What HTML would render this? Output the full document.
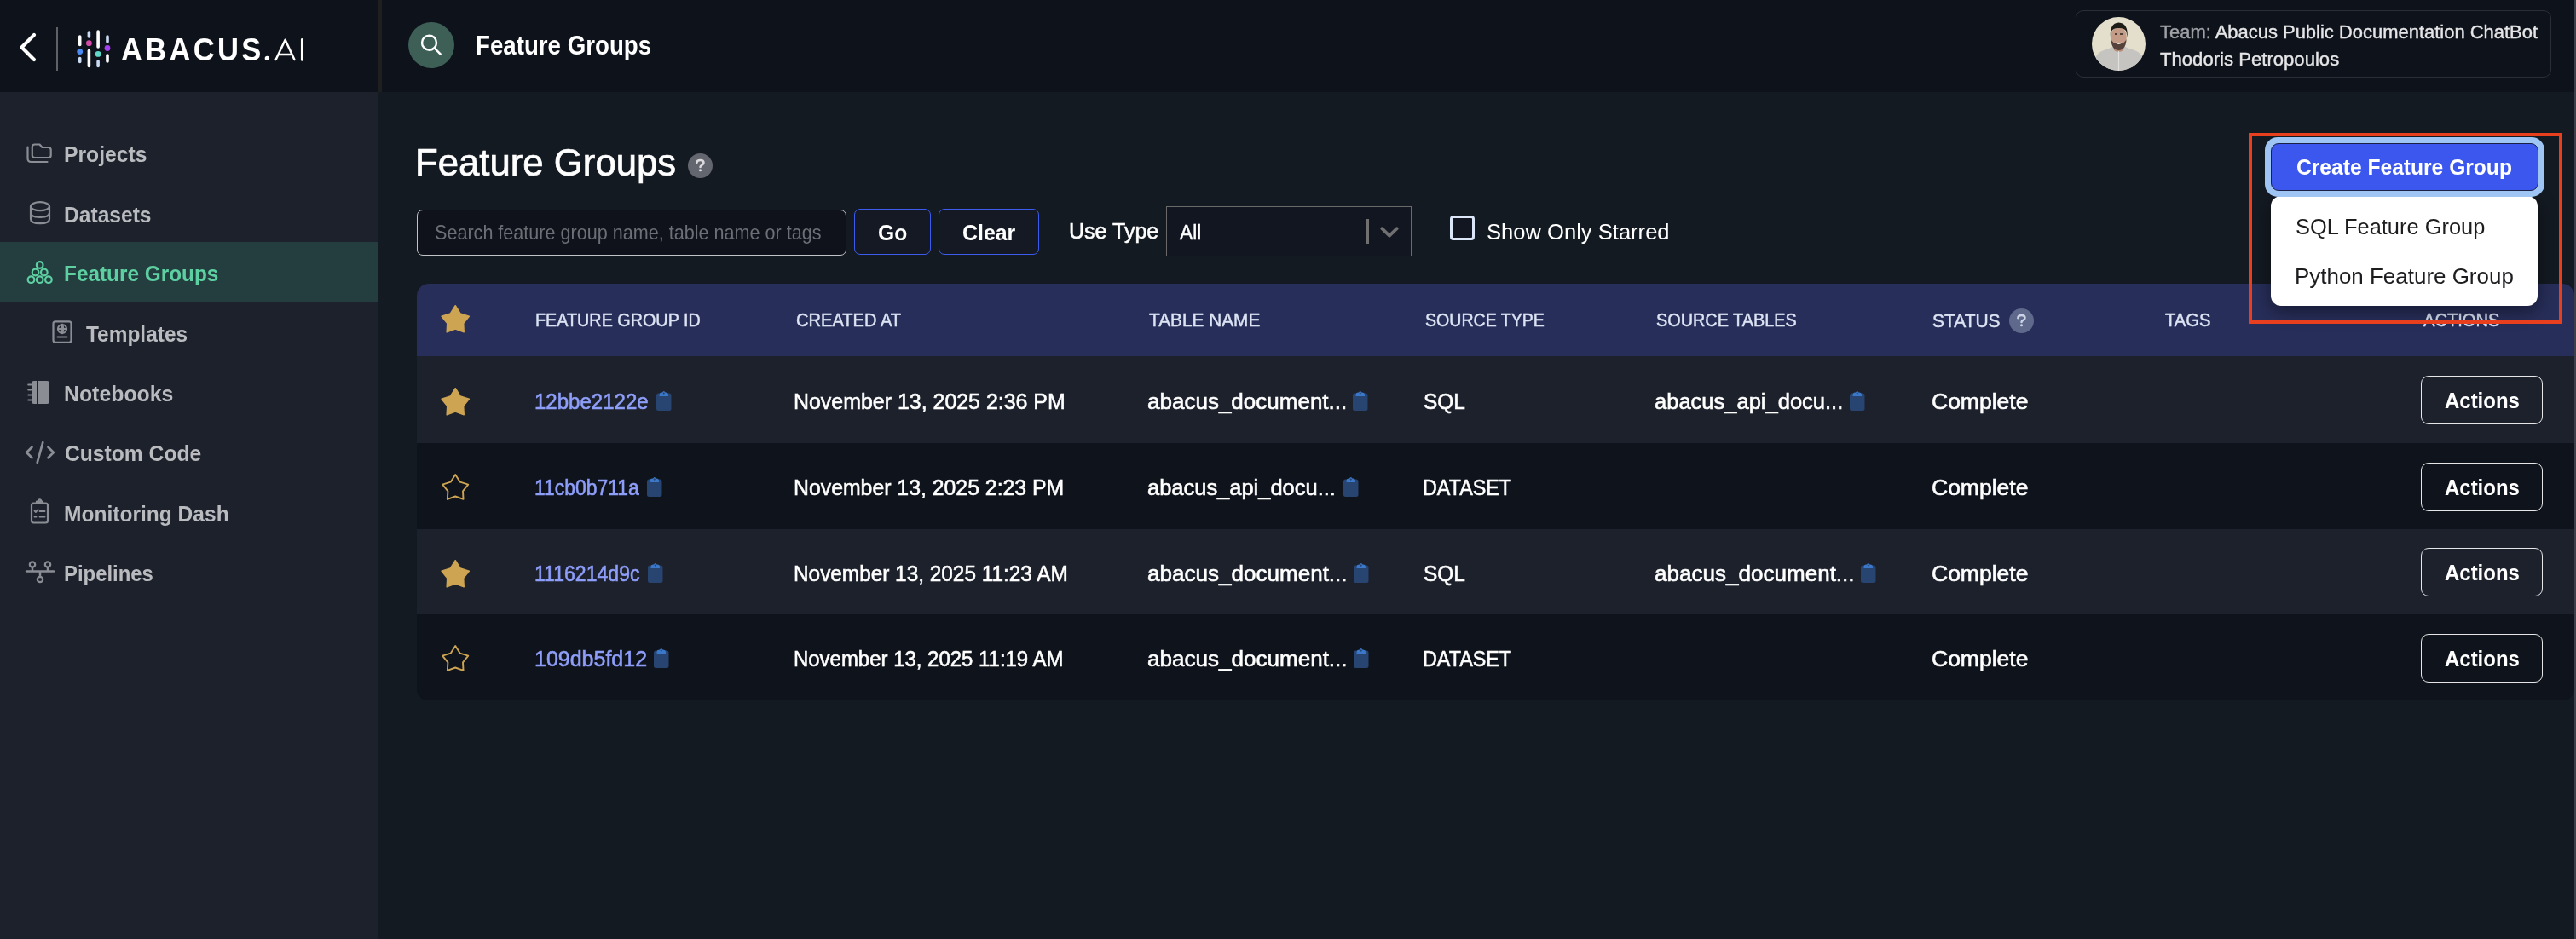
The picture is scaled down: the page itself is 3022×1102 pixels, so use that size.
<!DOCTYPE html>
<html><head><meta charset="utf-8">
<style>
*{margin:0;padding:0;box-sizing:border-box}
html,body{width:3022px;height:1102px;overflow:hidden;background:#141a22;font-family:"Liberation Sans",sans-serif}
.a{position:absolute}
.t{position:absolute;white-space:nowrap;line-height:1;font-family:"Liberation Sans",sans-serif;transform-origin:0 0}
</style></head>
<body>
<div class="a" style="left:0;top:0;width:3022px;height:108px;background:#0e121a"></div>
<div class="a" style="left:444px;top:0;width:4px;height:108px;background:#201f1f"></div>
<div class="a" style="left:0;top:108px;width:444px;height:994px;background:#1c212c"></div>
<svg class="a" style="left:0;top:0" width="444" height="108">
  <path d="M40 41 L25.5 55.5 L40 70" fill="none" stroke="#fff" stroke-width="4.2" stroke-linecap="round" stroke-linejoin="round"/>
  <rect x="66" y="32" width="2" height="51" fill="#5f6166"/>
  <g stroke-linecap="round" stroke-width="3.6">
    <line x1="93.7" y1="43" x2="93.7" y2="52.5" stroke="#fff"/>
    <line x1="93.7" y1="68.5" x2="93.7" y2="72.5" stroke="#c9dbf2"/>
    <line x1="104.4" y1="38" x2="104.4" y2="43" stroke="#c9dbf2"/>
    <line x1="104.4" y1="59.5" x2="104.4" y2="77.5" stroke="#fff"/>
    <line x1="115.1" y1="37" x2="115.1" y2="55" stroke="#fff"/>
    <line x1="115.1" y1="72" x2="115.1" y2="77.5" stroke="#c9dbf2"/>
    <line x1="126" y1="43" x2="126" y2="49" stroke="#c9dbf2"/>
    <line x1="126" y1="65" x2="126" y2="72" stroke="#fff"/>
  </g>
  <circle cx="93.7" cy="60.6" r="3.4" fill="#4a8af2"/>
  <circle cx="104.4" cy="50.7" r="3.4" fill="#d44aa8"/>
  <circle cx="115.1" cy="63.4" r="3.4" fill="#5fd8ca"/>
  <circle cx="126" cy="56.5" r="3.4" fill="#a43ff2"/>
  <circle cx="313.4" cy="68.4" r="2.7" fill="#fff"/>
  <path d="M323.6 70 L334.6 46.7 L345.4 70 M327.4 64 L341.2 64 M354.2 46.2 L354.2 70.6" fill="none" stroke="#fff" stroke-width="2.5" stroke-linecap="round" stroke-linejoin="round"/>
</svg>
<svg class="a" style="left:479px;top:26px" width="54" height="54">
  <circle cx="27" cy="27" r="27" fill="#3e5f56"/>
  <circle cx="24.5" cy="24.2" r="8.5" fill="none" stroke="#fff" stroke-width="2.4"/>
  <line x1="30.6" y1="30.4" x2="37.6" y2="37.4" stroke="#fff" stroke-width="2.5" stroke-linecap="round"/>
</svg>
<div class="a" style="left:2435px;top:12px;width:558px;height:79px;border:1.5px solid #2b2e36;border-radius:9px"></div>
<svg class="a" style="left:2454px;top:20px" width="63" height="63">
  <defs><clipPath id="av"><circle cx="31.5" cy="31.5" r="31.5"/></clipPath>
  <filter id="avb"><feGaussianBlur stdDeviation="0.6"/></filter></defs>
  <g clip-path="url(#av)">
    <rect width="63" height="63" fill="#e4dfcc"/>
    <g filter="url(#avb)">
    <path d="M2 63 L5 46 Q8 40 20 37 L26 34 L37 34 L44 37 Q56 40 59 46 L62 63 Z" fill="#c6c4c1"/>
    <path d="M25 33 L38 33 L37 39 Q31.5 43 26 39 Z" fill="#b48c76"/>
    <ellipse cx="31.5" cy="24" rx="9.3" ry="13" fill="#c39b86"/>
    <path d="M22 24 Q20.5 7 31.5 6.5 Q43 7 41.5 24 L40.5 17 Q38 12.5 31.5 13 Q25 12.5 23 17 Z" fill="#1f1a19"/>
    <path d="M22.5 26 Q23 38.5 31.5 39 Q40 38.5 40.5 26 Q39 31 31.5 31.5 Q24 31 22.5 26 Z" fill="#54433b"/>
    <path d="M27 20 L30 20 M33 20 L36 20" stroke="#2a2220" stroke-width="1.6"/>
    <path d="M28 30 Q31.5 32.5 35 30" stroke="#efe7e0" stroke-width="1.3" fill="none"/>
    <path d="M31.5 40 L31.5 63" stroke="#e2e0de" stroke-width="1.2"/>
    </g>
  </g>
</svg>
<div class="a" style="left:0;top:284px;width:444px;height:71px;background:#243e40"></div>
<svg class="a" style="left:0;top:108px" width="444" height="600" fill="none" stroke="#8a8d94" stroke-width="2.2" stroke-linecap="round" stroke-linejoin="round">
  <g transform="translate(0,-108)">
  <path d="M32.5 172.5 L32.5 186 Q32.5 190 36.5 190 L55.5 190"/>
  <path d="M37.8 182.5 L37.8 172.5 Q37.8 169.5 40.8 169.5 L46.5 169.5 L49.5 173 L56.5 173 Q59.7 173 59.7 176 L59.7 182.5 Q59.7 185 56.7 185 L40.8 185 Q37.8 185 37.8 182.5 Z"/>
  <ellipse cx="47" cy="242.2" rx="11" ry="5"/>
  <path d="M36 242.2 L36 257 Q36 262.2 47 262.2 Q58 262.2 58 257 L58 242.2"/>
  <path d="M36 249.7 Q36 254.8 47 254.8 Q58 254.8 58 249.7"/>
  </g>
  <g transform="translate(0,-108)" stroke="#5dcfa1" stroke-width="2.2">
  <circle cx="46.7" cy="311" r="3.8"/>
  <circle cx="41.6" cy="319.5" r="3.8"/><circle cx="51.8" cy="319.5" r="3.8"/>
  <circle cx="36.5" cy="328.2" r="3.8"/><circle cx="46.7" cy="328.2" r="3.8"/><circle cx="56.9" cy="328.2" r="3.8"/>
  </g>
  <g transform="translate(0,-108)">
  <rect x="62.5" y="377.3" width="21" height="24.5" rx="2.5"/>
  <circle cx="73" cy="386" r="5"/>
  <path d="M68 386 L78 386 M73 381 Q70.5 386 73 391 M73 381 Q75.5 386 73 391"/>
  <path d="M67.5 395.5 L78.5 395.5"/>
  <path d="M33.2 451.5 L36.5 451.5 M33.2 457.5 L36.5 457.5 M33.2 463.5 L36.5 463.5 M33.2 469.5 L36.5 469.5" stroke-width="2"/>
  <path d="M31.2 531 L37.5 524.7 M31.2 531 L37.5 537.3 M62.8 531 L56.5 524.7 M62.8 531 L56.5 537.3 M50.3 519.2 L43.7 542.8" stroke-width="2.7"/>
  <rect x="37" y="590.5" width="19" height="23" rx="2.5"/>
  <path d="M43 590.5 L43 588.5 L50 588.5 L50 590.5"/>
  <circle cx="46.5" cy="588" r="1.6"/>
  <path d="M40.5 599.5 L42 601 L44.5 598 M46.5 600 L52.5 600 M40.5 606.5 L42.5 606.5 M46.5 606.5 L52.5 606.5" stroke-width="1.8"/>
  <path d="M31 670.5 L63 670.5 M38 670.5 L38 666 M56 670.5 L56 666 M47 670.5 L47 677" stroke-width="2.5"/>
  <circle cx="38" cy="662.5" r="3.2"/><circle cx="56" cy="662.5" r="3.2"/><circle cx="47" cy="680" r="3.2"/>
  </g>
</svg>
<div class="a" style="left:37px;top:447px;width:21px;height:26.5px;border-radius:3px;background:#8a8d94"></div>
<div class="a" style="left:43px;top:447px;width:2px;height:26.5px;background:#1c212c"></div>
<svg class="a" style="left:807px;top:180px" width="29" height="29"><circle cx="14.5" cy="14.5" r="14.5" fill="#63666e"/><path d="M10.3 11.2 Q10.6 7.9 14.5 7.9 Q18.5 7.9 18.5 10.9 Q18.5 12.7 16.3 13.9 Q14.5 14.9 14.5 16.1" fill="none" stroke="#dcdcdf" stroke-width="2.5" stroke-linecap="round" stroke-linejoin="round"/><circle cx="14.5" cy="19.8" r="1.55" fill="#dcdcdf"/></svg>
<div class="a" style="left:489px;top:246px;width:504px;height:54px;border:1.5px solid #c2c3c6;border-radius:7px;background:#0f121a"></div>
<div class="a" style="left:1002px;top:245px;width:90px;height:54px;border:1.5px solid #3b5bef;border-radius:7px;background:#141923"></div>
<div class="a" style="left:1101px;top:245px;width:118px;height:54px;border:1.5px solid #3b5bef;border-radius:7px;background:#141923"></div>
<div class="a" style="left:1368px;top:242px;width:288px;height:59px;border:1.5px solid #6a6a6a;background:#111620"></div>
<div class="a" style="left:1603px;top:257px;width:2.5px;height:29px;background:#707070"></div>
<svg class="a" style="left:1615px;top:258px" width="32" height="26"><path d="M6.2 10.2 L15 18.6 L23.8 10.2" fill="none" stroke="#707070" stroke-width="3.8" stroke-linecap="round" stroke-linejoin="round"/></svg>
<div class="a" style="left:1701px;top:253px;width:29px;height:29px;border:3px solid #dbe7f9;border-radius:4px;background:#111620"></div>
<div class="a" style="left:489px;top:333px;width:2531px;height:489px;border-radius:14px;overflow:hidden;background:#0f131b">
<div class="a" style="left:0;top:0;width:2531px;height:85px;background:#272e59"></div>
<div class="a" style="left:0;top:85px;width:2531px;height:102px;background:#1c212c"></div>
<div class="a" style="left:0;top:187px;width:2531px;height:101px;background:#0f131b"></div>
<div class="a" style="left:0;top:288px;width:2531px;height:100px;background:#1c212c"></div>
<div class="a" style="left:0;top:388px;width:2531px;height:101px;background:#0f131b"></div>
</div>
<svg class="a" style="left:500px;top:350px" width="70" height="50"><path d="M34.20 8.80 L40.09 18.11 L50.25 21.15 L43.61 29.51 L44.18 39.67 L34.20 36.06 L24.23 39.67 L24.80 29.51 L18.15 21.15 L28.31 18.11 Z" fill="#cda452" stroke="#cda452" stroke-width="1.6" stroke-linejoin="round"/></svg>
<svg class="a" style="left:2357px;top:361.5px" width="29" height="29"><circle cx="14.5" cy="14.5" r="14.5" fill="#5f698c"/><path d="M10.3 11.2 Q10.6 7.9 14.5 7.9 Q18.5 7.9 18.5 10.9 Q18.5 12.7 16.3 13.9 Q14.5 14.9 14.5 16.1" fill="none" stroke="#cdd3e6" stroke-width="2.5" stroke-linecap="round" stroke-linejoin="round"/><circle cx="14.5" cy="19.8" r="1.55" fill="#cdd3e6"/></svg>
<svg class="a" style="left:500px;top:446.6px" width="70" height="50"><path d="M34.20 8.80 L40.09 18.11 L50.25 21.15 L43.61 29.51 L44.18 39.67 L34.20 36.06 L24.23 39.67 L24.80 29.51 L18.15 21.15 L28.31 18.11 Z" fill="#cda452" stroke="#cda452" stroke-width="1.6" stroke-linejoin="round"/></svg>
<svg class="a" style="left:768.6px;top:457.0px" width="20" height="27"><rect x="1" y="4.5" width="17.5" height="20.5" rx="2.5" fill="#284571"/><path d="M4.5 8 L4.5 6.5 Q4.5 3.5 7.5 3.5 L8 3.5 Q9.75 0.3 11.5 3.5 L12 3.5 Q15 3.5 15 6.5 L15 8 Z" fill="#3b78c9"/><path d="M9.75 3.3 L11 4.6 L9.75 5.9 L8.5 4.6 Z" fill="#284571"/></svg>
<svg class="a" style="left:1586.2px;top:457.0px" width="20" height="27"><rect x="1" y="4.5" width="17.5" height="20.5" rx="2.5" fill="#284571"/><path d="M4.5 8 L4.5 6.5 Q4.5 3.5 7.5 3.5 L8 3.5 Q9.75 0.3 11.5 3.5 L12 3.5 Q15 3.5 15 6.5 L15 8 Z" fill="#3b78c9"/><path d="M9.75 3.3 L11 4.6 L9.75 5.9 L8.5 4.6 Z" fill="#284571"/></svg>
<svg class="a" style="left:2169.2px;top:457.0px" width="20" height="27"><rect x="1" y="4.5" width="17.5" height="20.5" rx="2.5" fill="#284571"/><path d="M4.5 8 L4.5 6.5 Q4.5 3.5 7.5 3.5 L8 3.5 Q9.75 0.3 11.5 3.5 L12 3.5 Q15 3.5 15 6.5 L15 8 Z" fill="#3b78c9"/><path d="M9.75 3.3 L11 4.6 L9.75 5.9 L8.5 4.6 Z" fill="#284571"/></svg>
<div class="a" style="left:2840px;top:441.3px;width:143px;height:57px;border:1.5px solid #e6e6e8;border-radius:9px"></div>
<svg class="a" style="left:500px;top:547.7px" width="70" height="50"><path d="M34.20 8.97 L39.72 17.69 L49.24 20.54 L43.01 28.37 L43.55 37.90 L34.20 34.51 L24.86 37.90 L25.39 28.37 L19.16 20.54 L28.68 17.69 Z" fill="none" stroke="#cda452" stroke-width="1.9" stroke-linejoin="round"/></svg>
<svg class="a" style="left:758.2px;top:558.0999999999999px" width="20" height="27"><rect x="1" y="4.5" width="17.5" height="20.5" rx="2.5" fill="#284571"/><path d="M4.5 8 L4.5 6.5 Q4.5 3.5 7.5 3.5 L8 3.5 Q9.75 0.3 11.5 3.5 L12 3.5 Q15 3.5 15 6.5 L15 8 Z" fill="#3b78c9"/><path d="M9.75 3.3 L11 4.6 L9.75 5.9 L8.5 4.6 Z" fill="#284571"/></svg>
<svg class="a" style="left:1574.6px;top:558.0999999999999px" width="20" height="27"><rect x="1" y="4.5" width="17.5" height="20.5" rx="2.5" fill="#284571"/><path d="M4.5 8 L4.5 6.5 Q4.5 3.5 7.5 3.5 L8 3.5 Q9.75 0.3 11.5 3.5 L12 3.5 Q15 3.5 15 6.5 L15 8 Z" fill="#3b78c9"/><path d="M9.75 3.3 L11 4.6 L9.75 5.9 L8.5 4.6 Z" fill="#284571"/></svg>
<div class="a" style="left:2840px;top:542.8px;width:143px;height:57px;border:1.5px solid #e6e6e8;border-radius:9px"></div>
<svg class="a" style="left:500px;top:648.6px" width="70" height="50"><path d="M34.20 8.80 L40.09 18.11 L50.25 21.15 L43.61 29.51 L44.18 39.67 L34.20 36.06 L24.23 39.67 L24.80 29.51 L18.15 21.15 L28.31 18.11 Z" fill="#cda452" stroke="#cda452" stroke-width="1.6" stroke-linejoin="round"/></svg>
<svg class="a" style="left:759.2px;top:659.0px" width="20" height="27"><rect x="1" y="4.5" width="17.5" height="20.5" rx="2.5" fill="#284571"/><path d="M4.5 8 L4.5 6.5 Q4.5 3.5 7.5 3.5 L8 3.5 Q9.75 0.3 11.5 3.5 L12 3.5 Q15 3.5 15 6.5 L15 8 Z" fill="#3b78c9"/><path d="M9.75 3.3 L11 4.6 L9.75 5.9 L8.5 4.6 Z" fill="#284571"/></svg>
<svg class="a" style="left:1586.6px;top:659.0px" width="20" height="27"><rect x="1" y="4.5" width="17.5" height="20.5" rx="2.5" fill="#284571"/><path d="M4.5 8 L4.5 6.5 Q4.5 3.5 7.5 3.5 L8 3.5 Q9.75 0.3 11.5 3.5 L12 3.5 Q15 3.5 15 6.5 L15 8 Z" fill="#3b78c9"/><path d="M9.75 3.3 L11 4.6 L9.75 5.9 L8.5 4.6 Z" fill="#284571"/></svg>
<svg class="a" style="left:2182.2px;top:659.0px" width="20" height="27"><rect x="1" y="4.5" width="17.5" height="20.5" rx="2.5" fill="#284571"/><path d="M4.5 8 L4.5 6.5 Q4.5 3.5 7.5 3.5 L8 3.5 Q9.75 0.3 11.5 3.5 L12 3.5 Q15 3.5 15 6.5 L15 8 Z" fill="#3b78c9"/><path d="M9.75 3.3 L11 4.6 L9.75 5.9 L8.5 4.6 Z" fill="#284571"/></svg>
<div class="a" style="left:2840px;top:643.3px;width:143px;height:57px;border:1.5px solid #e6e6e8;border-radius:9px"></div>
<svg class="a" style="left:500px;top:748.7px" width="70" height="50"><path d="M34.20 8.97 L39.72 17.69 L49.24 20.54 L43.01 28.37 L43.55 37.90 L34.20 34.51 L24.86 37.90 L25.39 28.37 L19.16 20.54 L28.68 17.69 Z" fill="none" stroke="#cda452" stroke-width="1.9" stroke-linejoin="round"/></svg>
<svg class="a" style="left:766.2px;top:759.0999999999999px" width="20" height="27"><rect x="1" y="4.5" width="17.5" height="20.5" rx="2.5" fill="#284571"/><path d="M4.5 8 L4.5 6.5 Q4.5 3.5 7.5 3.5 L8 3.5 Q9.75 0.3 11.5 3.5 L12 3.5 Q15 3.5 15 6.5 L15 8 Z" fill="#3b78c9"/><path d="M9.75 3.3 L11 4.6 L9.75 5.9 L8.5 4.6 Z" fill="#284571"/></svg>
<svg class="a" style="left:1586.6px;top:759.0999999999999px" width="20" height="27"><rect x="1" y="4.5" width="17.5" height="20.5" rx="2.5" fill="#284571"/><path d="M4.5 8 L4.5 6.5 Q4.5 3.5 7.5 3.5 L8 3.5 Q9.75 0.3 11.5 3.5 L12 3.5 Q15 3.5 15 6.5 L15 8 Z" fill="#3b78c9"/><path d="M9.75 3.3 L11 4.6 L9.75 5.9 L8.5 4.6 Z" fill="#284571"/></svg>
<div class="a" style="left:2840px;top:743.8px;width:143px;height:57px;border:1.5px solid #e6e6e8;border-radius:9px"></div>
<div class="t" style="left:142.35px;top:40.60px;font-size:36.23px;font-weight:bold;color:#fff;transform:scaleX(0.9529);letter-spacing:3.5px;">ABACUS</div>
<div class="t" style="left:558.21px;top:38.56px;font-size:30.87px;font-weight:bold;color:#fff;transform:scaleX(0.8969);">Feature Groups</div>
<div class="t" style="left:2534.00px;top:26.16px;font-size:22.75px;font-weight:normal;color:#e6e6e8;transform:scaleX(0.9651);-webkit-text-stroke-width:0.4px;"><span style="color:#9fa1a6">Team:</span> Abacus Public Documentation ChatBot</div>
<div class="t" style="left:2534.00px;top:58.46px;font-size:22.75px;font-weight:normal;color:#e6e6e8;transform:scaleX(0.9721);-webkit-text-stroke-width:0.4px;">Thodoris Petropoulos</div>
<div class="t" style="left:74.83px;top:168.28px;font-size:26.38px;font-weight:bold;color:#b9bbbf;transform:scaleX(0.9366);">Projects</div>
<div class="t" style="left:74.83px;top:238.88px;font-size:26.38px;font-weight:bold;color:#b9bbbf;transform:scaleX(0.9327);">Datasets</div>
<div class="t" style="left:74.85px;top:308.28px;font-size:26.38px;font-weight:bold;color:#5dcfa1;transform:scaleX(0.9237);">Feature Groups</div>
<div class="t" style="left:101.40px;top:379.08px;font-size:26.38px;font-weight:bold;color:#b9bbbf;transform:scaleX(0.9266);">Templates</div>
<div class="t" style="left:74.82px;top:448.78px;font-size:26.38px;font-weight:bold;color:#b9bbbf;transform:scaleX(0.9421);">Notebooks</div>
<div class="t" style="left:75.77px;top:518.88px;font-size:26.38px;font-weight:bold;color:#b9bbbf;transform:scaleX(0.9347);">Custom Code</div>
<div class="t" style="left:74.84px;top:589.58px;font-size:26.38px;font-weight:bold;color:#b9bbbf;transform:scaleX(0.9307);">Monitoring Dash</div>
<div class="t" style="left:74.89px;top:659.58px;font-size:26.38px;font-weight:bold;color:#b9bbbf;transform:scaleX(0.9053);">Pipelines</div>
<div class="t" style="left:487.13px;top:168.26px;font-size:45.22px;font-weight:normal;color:#fff;transform:scaleX(0.9669);-webkit-text-stroke-width:0.7px;">Feature Groups</div>
<div class="t" style="left:509.77px;top:261.79px;font-size:23.19px;font-weight:normal;color:#6d6f76;transform:scaleX(0.9307);">Search feature group name, table name or tags</div>
<div class="t" style="left:1030.04px;top:261.22px;font-size:25.51px;font-weight:bold;color:#fff;transform:scaleX(0.9647);">Go</div>
<div class="t" style="left:1128.52px;top:261.22px;font-size:25.51px;font-weight:bold;color:#fff;transform:scaleX(0.9762);">Clear</div>
<div class="t" style="left:1254.08px;top:258.32px;font-size:26.09px;font-weight:normal;color:#fff;transform:scaleX(0.9598);-webkit-text-stroke-width:0.5px;">Use Type</div>
<div class="t" style="left:1384.00px;top:261.30px;font-size:23.77px;font-weight:normal;color:#fff;transform:scaleX(0.9600);-webkit-text-stroke-width:0.4px;">All</div>
<div class="t" style="left:1744.21px;top:259.57px;font-size:25.8px;font-weight:normal;color:#fff;transform:scaleX(0.9911);">Show Only Starred</div>
<div class="t" style="left:628.21px;top:364.66px;font-size:22.17px;font-weight:normal;color:#dce4f4;transform:scaleX(0.8925);-webkit-text-stroke-width:0.45px;">FEATURE GROUP ID</div>
<div class="t" style="left:933.79px;top:364.66px;font-size:22.17px;font-weight:normal;color:#dce4f4;transform:scaleX(0.9059);-webkit-text-stroke-width:0.45px;">CREATED AT</div>
<div class="t" style="left:1348.40px;top:364.66px;font-size:22.17px;font-weight:normal;color:#dce4f4;transform:scaleX(0.9391);-webkit-text-stroke-width:0.45px;">TABLE NAME</div>
<div class="t" style="left:1671.52px;top:364.66px;font-size:22.17px;font-weight:normal;color:#dce4f4;transform:scaleX(0.8828);-webkit-text-stroke-width:0.45px;">SOURCE TYPE</div>
<div class="t" style="left:1943.10px;top:364.66px;font-size:22.17px;font-weight:normal;color:#dce4f4;transform:scaleX(0.8956);-webkit-text-stroke-width:0.45px;">SOURCE TABLES</div>
<div class="t" style="left:2267.05px;top:366.26px;font-size:22.17px;font-weight:normal;color:#dce4f4;transform:scaleX(0.9463);-webkit-text-stroke-width:0.45px;">STATUS</div>
<div class="t" style="left:2540.00px;top:364.66px;font-size:22.17px;font-weight:normal;color:#dce4f4;transform:scaleX(0.9138);-webkit-text-stroke-width:0.45px;">TAGS</div>
<div class="t" style="left:2843.00px;top:364.66px;font-size:22.17px;font-weight:normal;color:#dce4f4;transform:scaleX(0.9082);-webkit-text-stroke-width:0.45px;">ACTIONS</div>
<div class="t" style="left:626.68px;top:458.28px;font-size:26.38px;font-weight:normal;color:#8e9ef9;transform:scaleX(0.9118);-webkit-text-stroke-width:0.6px;">12bbe2122e</div>
<div class="t" style="left:931.31px;top:458.28px;font-size:26.38px;font-weight:normal;color:#fff;transform:scaleX(0.9453);-webkit-text-stroke-width:0.6px;">November 13, 2025 2:36 PM</div>
<div class="t" style="left:1345.51px;top:458.28px;font-size:26.38px;font-weight:normal;color:#fff;transform:scaleX(0.9863);-webkit-text-stroke-width:0.6px;">abacus_document...</div>
<div class="t" style="left:1669.87px;top:458.28px;font-size:26.38px;font-weight:normal;color:#fff;transform:scaleX(0.9255);-webkit-text-stroke-width:0.6px;">SQL</div>
<div class="t" style="left:1941.33px;top:458.28px;font-size:26.38px;font-weight:normal;color:#fff;transform:scaleX(0.9673);-webkit-text-stroke-width:0.6px;">abacus_api_docu...</div>
<div class="t" style="left:2265.50px;top:458.28px;font-size:26.38px;font-weight:normal;color:#fff;transform:scaleX(1.0045);-webkit-text-stroke-width:0.6px;">Complete</div>
<div class="t" style="left:2867.79px;top:457.48px;font-size:26.38px;font-weight:bold;color:#fff;transform:scaleX(0.9084);">Actions</div>
<div class="t" style="left:626.76px;top:559.38px;font-size:26.38px;font-weight:normal;color:#8e9ef9;transform:scaleX(0.8691);-webkit-text-stroke-width:0.6px;">11cb0b711a</div>
<div class="t" style="left:931.32px;top:559.38px;font-size:26.38px;font-weight:normal;color:#fff;transform:scaleX(0.9408);-webkit-text-stroke-width:0.6px;">November 13, 2025 2:23 PM</div>
<div class="t" style="left:1345.53px;top:559.38px;font-size:26.38px;font-weight:normal;color:#fff;transform:scaleX(0.9655);-webkit-text-stroke-width:0.6px;">abacus_api_docu...</div>
<div class="t" style="left:1669.03px;top:559.38px;font-size:26.38px;font-weight:normal;color:#fff;transform:scaleX(0.8835);-webkit-text-stroke-width:0.6px;">DATASET</div>
<div class="t" style="left:2265.50px;top:559.38px;font-size:26.38px;font-weight:normal;color:#fff;transform:scaleX(1.0045);-webkit-text-stroke-width:0.6px;">Complete</div>
<div class="t" style="left:2867.79px;top:558.58px;font-size:26.38px;font-weight:bold;color:#fff;transform:scaleX(0.9084);">Actions</div>
<div class="t" style="left:626.75px;top:660.28px;font-size:26.38px;font-weight:normal;color:#8e9ef9;transform:scaleX(0.8741);-webkit-text-stroke-width:0.6px;">1116214d9c</div>
<div class="t" style="left:931.35px;top:660.28px;font-size:26.38px;font-weight:normal;color:#fff;transform:scaleX(0.9235);-webkit-text-stroke-width:0.6px;">November 13, 2025 11:23 AM</div>
<div class="t" style="left:1345.51px;top:660.28px;font-size:26.38px;font-weight:normal;color:#fff;transform:scaleX(0.9876);-webkit-text-stroke-width:0.6px;">abacus_document...</div>
<div class="t" style="left:1669.87px;top:660.28px;font-size:26.38px;font-weight:normal;color:#fff;transform:scaleX(0.9255);-webkit-text-stroke-width:0.6px;">SQL</div>
<div class="t" style="left:1941.31px;top:660.28px;font-size:26.38px;font-weight:normal;color:#fff;transform:scaleX(0.9876);-webkit-text-stroke-width:0.6px;">abacus_document...</div>
<div class="t" style="left:2265.50px;top:660.28px;font-size:26.38px;font-weight:normal;color:#fff;transform:scaleX(1.0045);-webkit-text-stroke-width:0.6px;">Complete</div>
<div class="t" style="left:2867.79px;top:659.48px;font-size:26.38px;font-weight:bold;color:#fff;transform:scaleX(0.9084);">Actions</div>
<div class="t" style="left:626.60px;top:760.38px;font-size:26.38px;font-weight:normal;color:#8e9ef9;transform:scaleX(0.9478);-webkit-text-stroke-width:0.6px;">109db5fd12</div>
<div class="t" style="left:931.38px;top:760.38px;font-size:26.38px;font-weight:normal;color:#fff;transform:scaleX(0.9081);-webkit-text-stroke-width:0.6px;">November 13, 2025 11:19 AM</div>
<div class="t" style="left:1345.51px;top:760.38px;font-size:26.38px;font-weight:normal;color:#fff;transform:scaleX(0.9876);-webkit-text-stroke-width:0.6px;">abacus_document...</div>
<div class="t" style="left:1669.03px;top:760.38px;font-size:26.38px;font-weight:normal;color:#fff;transform:scaleX(0.8835);-webkit-text-stroke-width:0.6px;">DATASET</div>
<div class="t" style="left:2265.50px;top:760.38px;font-size:26.38px;font-weight:normal;color:#fff;transform:scaleX(1.0045);-webkit-text-stroke-width:0.6px;">Complete</div>
<div class="t" style="left:2867.79px;top:759.58px;font-size:26.38px;font-weight:bold;color:#fff;transform:scaleX(0.9084);">Actions</div>
<div class="a" style="left:2664px;top:230px;width:313px;height:129px;border-radius:12px;background:#fff;box-shadow:0 6px 22px rgba(0,0,0,.45)"></div>
<div class="a" style="left:2657px;top:161px;width:328px;height:70px;border-radius:15px;background:#9ec5f4"></div>
<div class="a" style="left:2664px;top:168px;width:314px;height:56px;border-radius:9px;background:#3b57ee;border:1.2px solid #1a2145"></div>
<div class="t" style="left:2694.26px;top:183.00px;font-size:26.23px;font-weight:bold;color:#fff;transform:scaleX(0.9384);">Create Feature Group</div>
<div class="t" style="left:2692.64px;top:253.18px;font-size:26.38px;font-weight:normal;color:#1d1d20;transform:scaleX(0.9638);">SQL Feature Group</div>
<div class="t" style="left:2691.63px;top:311.08px;font-size:26.38px;font-weight:normal;color:#1d1d20;transform:scaleX(0.9841);">Python Feature Group</div>
<div class="a" style="left:3020px;top:0;width:2px;height:1102px;background:#3d404b"></div><div class="a" style="left:2638px;top:156px;width:368px;height:224px;border:4px solid #e8401e"></div>
</body></html>
